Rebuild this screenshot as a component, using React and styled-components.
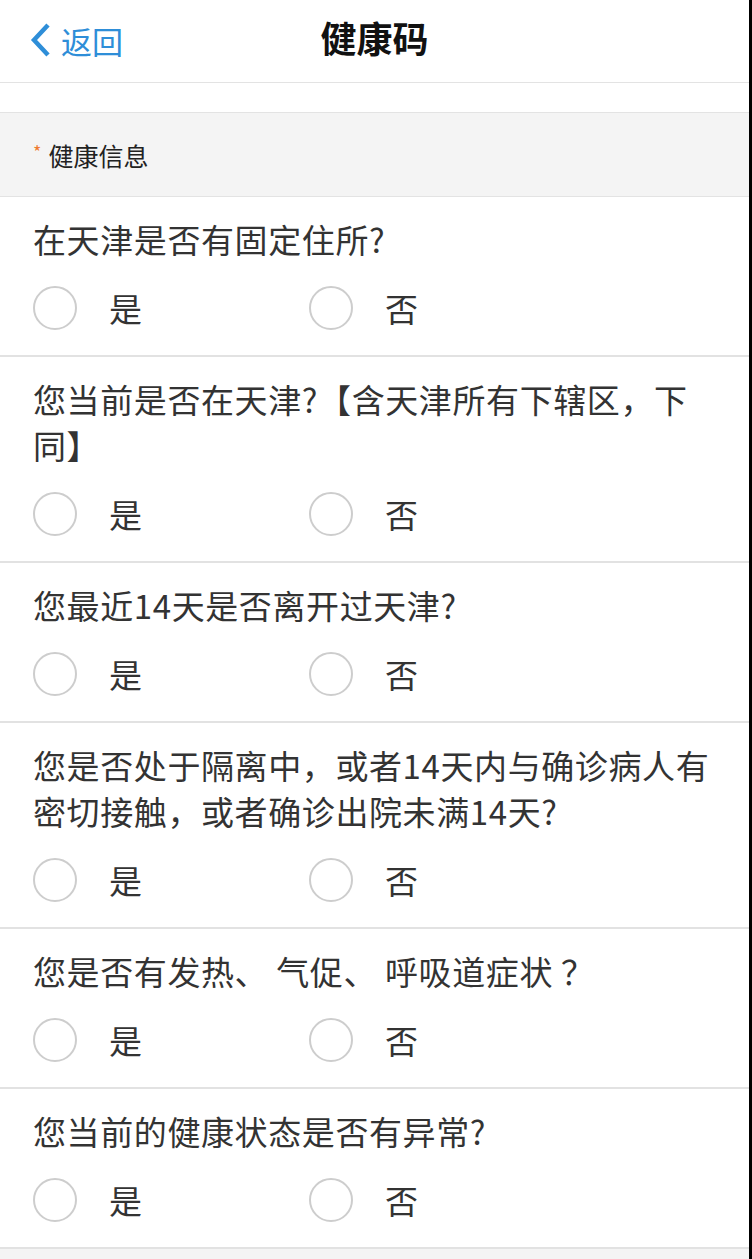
import React from "react";
import styled, { createGlobalStyle } from "styled-components";

const questions = [
  "在天津是否有固定住所?",
  "您当前是否在天津?【含天津所有下辖区，下同】",
  "您最近14天是否离开过天津?",
  "您是否处于隔离中，或者14天内与确诊病人有密切接触，或者确诊出院未满14天?",
  "您是否有发热、 气促、 呼吸道症状 ？",
  "您当前的健康状态是否有异常?",
];

const App = () => {
  return (
    <Page>
      <GlobalStyle />
      <Header>
        <Back>
          <svg width="24" height="36" viewBox="0 0 24 36">
            <polyline
              points="19,3 5,18 19,33"
              fill="none"
              stroke="#2e8ed8"
              strokeWidth="4.5"
              strokeLinejoin="miter"
            />
          </svg>
          <span>返回</span>
        </Back>
        <Title>健康码</Title>
        <div />
      </Header>
      <Spacer />
      <SectionHead>
        <Star>*</Star>健康信息
      </SectionHead>
      {questions.map((q, i) => (
        <Question key={i}>
          <QText>{q}</QText>
          <Options>
            <Option>
              <Circle />
              <Label>是</Label>
            </Option>
            <Option>
              <Circle />
              <Label>否</Label>
            </Option>
          </Options>
        </Question>
      ))}
      <Footer />
    </Page>
  );
};

const GlobalStyle = createGlobalStyle`
  html, body {
    margin: 0;
    padding: 0;
    background: #fff;
    font-family: "Noto Sans CJK SC", "Noto Sans", sans-serif;
  }
`;

const Page = styled.div`
  width: 749px;
  min-height: 1259px;
  border-right: 3px solid #000;
  background: #f4f4f4;
  overflow: hidden;
`;

const Header = styled.div`
  height: 82px;
  background: #fff;
  border-bottom: 1px solid #e3e3e3;
  display: grid;
  grid-template-columns: 1fr auto 1fr;
  align-items: center;
`;

const Back = styled.div`
  display: flex;
  align-items: center;
  gap: 8px;
  padding-left: 29px;
  margin-top: -2px;
  color: #2e8ed8;
  font-size: 31px;
  line-height: 1;
  svg {
    display: block;
  }
`;

const Title = styled.div`
  font-size: 36px;
  font-weight: 700;
  color: #111;
  margin-top: -9px;
`;

const Spacer = styled.div`
  height: 29px;
  background: #fff;
  border-bottom: 1px solid #e3e3e3;
`;

const SectionHead = styled.div`
  height: 83px;
  display: flex;
  align-items: center;
  padding-left: 33px;
  background: #f4f4f4;
  border-bottom: 1px solid #e3e3e3;
  font-size: 25px;
  color: #222;
`;

const Star = styled.span`
  color: #ef7b2f;
  font-size: 18px;
  margin-right: 7px;
  margin-top: -8px;
`;

const Question = styled.div`
  background: #fff;
  padding: 19px 33px 25px 33px;
  border-bottom: 2px solid #e2e2e2;
`;

const QText = styled.div`
  font-size: 33px;
  line-height: 46px;
  letter-spacing: 0.6px;
  color: #333;
`;

const Options = styled.div`
  display: flex;
  margin-top: 24px;
`;

const Option = styled.div`
  width: 276px;
  display: flex;
  align-items: center;
  gap: 32px;
`;

const Circle = styled.div`
  width: 44px;
  height: 44px;
  box-sizing: border-box;
  border-radius: 50%;
  border: 2px solid #cdcdcd;
`;

const Label = styled.span`
  font-size: 33px;
  line-height: 44px;
  color: #333;
`;

const Footer = styled.div`
  height: 20px;
  background: #f4f4f4;
`;

export default App;
